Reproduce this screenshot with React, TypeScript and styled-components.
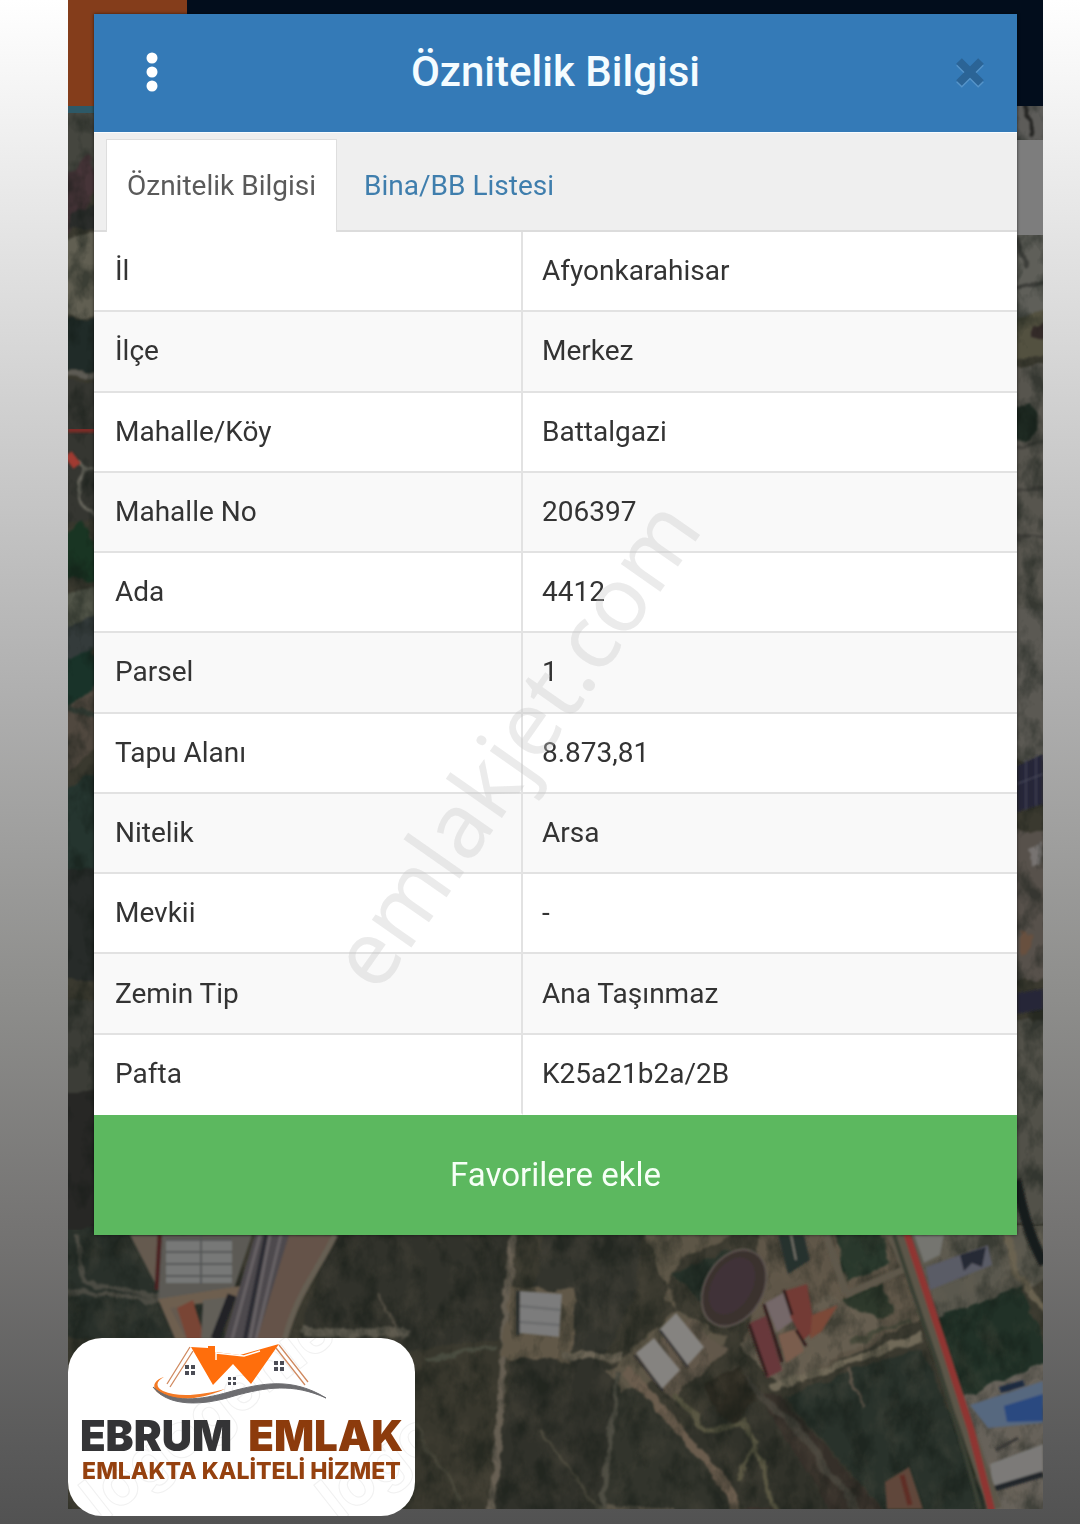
import React, { useState } from "react";
import styled, { createGlobalStyle } from "styled-components";

const GlobalStyle = createGlobalStyle`
  *, *::before, *::after { box-sizing: border-box; }
  body { margin: 0; font-family: Roboto, "Liberation Sans", sans-serif; color: #333; }
`;

const Page = styled.div`
  min-height: 100vh;
  padding: 0 37px 15px 68px;
  background: linear-gradient(180deg, #fff 0%, #dcdcdc 20%, #b0b0b0 45%, #8e8e8c 65%, #747372 81%, #5a5a5a 95%, #525252 100%);
`;

const Stage = styled.main`
  position: relative;
  padding: 14px 26px 274px;
  background: #33352e;
`;

const MapArt = styled.svg`
  position: absolute;
  inset: 0;
  width: 100%;
  height: 100%;
  display: block;
`;

const Dialog = styled.section`
  position: relative;
  background: #fff;
  box-shadow: 0 0 3px rgba(0, 0, 0, 0.6);
`;

const Header = styled.header`
  display: flex;
  align-items: center;
  justify-content: space-between;
  height: 118px;
  padding: 0 27px 2px 38px;
  background: #347ab7;
`;

const Title = styled.h1`
  flex: 1;
  margin: 0;
  padding-right: 11px;
  text-align: center;
  font-size: 42px;
  line-height: 56px;
  font-weight: 500;
  color: #f4fcff;
`;

const IconButton = styled.button`
  display: flex;
  align-items: center;
  justify-content: center;
  width: 40px;
  height: 56px;
  padding: 0;
  border: 0;
  background: none;
  cursor: pointer;
`;

const Tabs = styled.nav`
  display: flex;
  align-items: flex-end;
  height: 100px;
  padding-left: 12px;
  background: #efefef;
  border-top: 1px solid #f8fcff;
  box-shadow: inset 0 -2px #dcdcdc;
`;

const Tab = styled.button<{ $active: boolean }>`
  height: 93px;
  padding: 0 20px 1px;
  border: 1px solid ${(p) => (p.$active ? "#dedede" : "transparent")};
  border-bottom: 0;
  background: ${(p) => (p.$active ? "#fff" : "transparent")};
  color: ${(p) => (p.$active ? "#5a5a5a" : "#3f7ead")};
  font: 400 28px/40px Roboto, "Liberation Sans", sans-serif;
  margin-right: 6px;
  cursor: pointer;
`;

const Table = styled.table`
  width: 100%;
  height: 883px;
  table-layout: fixed;
  border-spacing: 0;
`;

const Row = styled.tr`
  &:nth-child(even) { background: #f9f9f9; }
  & > * { border-bottom: 2px solid #e2e2e2; }
  &:last-child > * { border-bottom-color: #fff; }
`;

const Label = styled.th`
  width: 429px;
  padding: 0 21px;
  border-right: 2px solid #e2e2e2;
  text-align: left;
  font-size: 28px;
  line-height: 40px;
  font-weight: 400;
`;

const Value = styled.td`
  padding: 0 19px;
  font-size: 28px;
  line-height: 40px;
`;

const Favorite = styled.button`
  display: block;
  width: 100%;
  height: 120px;
  border: 0;
  background: #5cb85f;
  color: #f6fff6;
  font: 400 33px/44px Roboto, "Liberation Sans", sans-serif;
  cursor: pointer;
`;

const Watermark = styled.span`
  position: absolute;
  left: 318px;
  top: 911px;
  font: 400 90px/90px "Noto Sans", sans-serif;
  color: rgba(200, 200, 200, 0.36);
  white-space: nowrap;
  transform: rotate(-55deg);
  transform-origin: 0 100%;
  pointer-events: none;
`;

const Brand = styled.aside`
  position: absolute;
  left: 0;
  bottom: -7px;
  display: flex;
  flex-direction: column;
  align-items: center;
  width: 347px;
  height: 178px;
  padding-top: 6px;
  overflow: hidden;
  border-radius: 34px;
  background: #fff;
`;

const BrandPattern = styled.span<{ $left: number }>`
  position: absolute;
  left: ${(p) => p.$left}px;
  bottom: -14px;
  font: 700 62px/62px Inter, sans-serif;
  color: transparent;
  -webkit-text-stroke: 1px #f1f1f1;
  white-space: nowrap;
  transform: rotate(-38deg);
  transform-origin: 0 100%;
`;

const House = styled.svg`
  position: relative;
  flex: none;
`;

const BrandName = styled.strong`
  position: relative;
  display: flex;
  gap: 16px;
  margin-top: 12px;
  font: 900 42px/40px Inter, sans-serif;
  color: #343436;
`;

const BrandAccent = styled.span`
  color: #8c3b0c;
`;

const BrandLine = styled.span`
  position: relative;
  font: 800 23px/30px Inter, sans-serif;
  color: #95410f;
  white-space: nowrap;
`;

const rows: [string, string][] = [
  ["İl", "Afyonkarahisar"],
  ["İlçe", "Merkez"],
  ["Mahalle/Köy", "Battalgazi"],
  ["Mahalle No", "206397"],
  ["Ada", "4412"],
  ["Parsel", "1"],
  ["Tapu Alanı", "8.873,81"],
  ["Nitelik", "Arsa"],
  ["Mevkii", "-"],
  ["Zemin Tip", "Ana Taşınmaz"],
  ["Pafta", "K25a21b2a/2B"],
];

const tabs = ["Öznitelik Bilgisi", "Bina/BB Listesi"];

function SatelliteMap() {
  return (
    <MapArt viewBox="68 0 975 1509" preserveAspectRatio="none" aria-hidden="true">
      <defs>
        <filter id="terrain" x="0" y="0" width="100%" height="100%" colorInterpolationFilters="sRGB">
          <feTurbulence type="fractalNoise" baseFrequency="0.05" numOctaves="3" seed="4" result="n" />
          <feDisplacementMap in="SourceGraphic" in2="n" scale="12" xChannelSelector="R" yChannelSelector="G" />
          <feGaussianBlur stdDeviation="1" />
        </filter>
        <filter id="soft" x="0" y="0" width="100%" height="100%">
          <feGaussianBlur stdDeviation="1" />
        </filter>
        <filter id="shade" x="0" y="0" width="100%" height="100%" colorInterpolationFilters="sRGB">
          <feTurbulence type="fractalNoise" baseFrequency="0.045 0.03" numOctaves="4" seed="8" />
          <feColorMatrix values="0 0 0 0 0.06  0 0 0 0 0.09  0 0 0 0 0.07  3 0 0 0 -1.3" />
        </filter>
        <filter id="dust" x="0" y="0" width="100%" height="100%" colorInterpolationFilters="sRGB">
          <feTurbulence type="fractalNoise" baseFrequency="0.04 0.03" numOctaves="5" seed="21" />
          <feColorMatrix values="0 0 0 0 0.48  0 0 0 0 0.43  0 0 0 0 0.36  0 3 0 0 -1.4" />
        </filter>
      </defs>
      <rect x="68" y="0" width="975" height="1509" fill="#3a392f" />
      <g filter="url(#terrain)">
        {/* fields under the dialog's lower edge */}
        <path d="M60 1225h90l80 114H60z" fill="#29302a" />
        <path d="M60 1290l118 12M76 1235l8 47 76 14" stroke="#4b4b43" strokeWidth="5" fill="none" />
        <path d="M330 1225h185l-10 115-90 40H290z" fill="#31322b" />
        <path d="M405 1350l95-10-7 180h-88z" fill="#38372d" />
        <path d="M515 1340l103 25-10 156h-118z" fill="#30312a" />
        <path d="M620 1370l110 120v29H602z" fill="#32342c" />
        <path d="M784 1395l138-48 70 172H890z" fill="#29322b" />
        <path d="M780 1395l110 124H745l-14-130z" fill="#352f29" />
        <path d="M545 1225h100l-10 70-30 60-80-14z" fill="#33342d" />
        <path d="M928 1310l90-28 35 80-60 30-24 70z" fill="#213127" />
        <path d="M680 1430l70-50 80 130H735z" fill="#31322a" />

        {/* roads and yards */}
        <path d="M300 1330c30 8 60-4 110 6" stroke="#5b584d" strokeWidth="9" fill="none" />
        <path d="M378 1294l18 34" stroke="#575247" strokeWidth="3" />
        <path d="M514 1225l-7 80-9 140-9 74" stroke="#655e52" strokeWidth="8" fill="none" />
        <path d="M425 1362l70-15" stroke="#484b3f" strokeWidth="4" />
        <path d="M512 1285l63 6-3 70-72-4z" fill="#615848" />
        <path d="M640 1225h120l-80 35-15 40 60 38-30 42-40-2-30 15-18-20 70-65z" fill="#5d5647" />
        <path d="M562 1354l60 3" stroke="#6c6556" strokeWidth="8" />
        <path d="M625 1368l80 90 28 38v23" stroke="#6a5c4d" strokeWidth="9" fill="none" />
        <path d="M618 1370l-10 80-8 69" stroke="#4e4d43" strokeWidth="5" fill="none" />
        <path d="M632 1358l60-40 34 32-52 50z" fill="#61574a" />
        <path d="M675 1272l45-18 36-5-54 54-22-20z" fill="#263129" />
        <path d="M760 1225h140l30 90-140 68-45-36z" fill="#5f5648" />
        <path d="M834 1225h45l10 40-45 15z" fill="#29382c" />
        <path d="M842 1300l40-18 10 30-38 19z" fill="#2d382b" />
        <path d="M740 1345l90-50 60 32-110 60z" fill="#665e50" />
        <path d="M770 1388l152-52" stroke="#706958" strokeWidth="8" />
        <path d="M850 1342l64-22" stroke="#484a3b" strokeWidth="4" />
        <path d="M730 1370l60 50 75 99" stroke="#45423a" strokeWidth="8" fill="none" />
        <path d="M704 1382l34-14 20 30-20 24-22-8z" fill="#2d2b22" />
        <path d="M675 1395l30 34 38-6 12 20-16 38M755 1445l25 74" stroke="#575541" strokeWidth="5" fill="none" />
        <path d="M849 1370l16 38" stroke="#5a5247" strokeWidth="3" />
        <path d="M400 1400l60 100M540 1430l60 80" stroke="#47463a" strokeWidth="3" />
        <path d="M605 1505l70 4v15h-75z" fill="#5a5548" />
        <path d="M908 1225h145v50l-128 48z" fill="#5a584e" />
        <path d="M955 1400l98-42v161h-58z" fill="#67625a" />
        <path d="M1005 1225c5 40 18 68 48 90" stroke="#68614f" strokeWidth="7" fill="none" />
      </g>
      <rect x="68" y="1225" width="975" height="284" filter="url(#shade)" opacity="0.42" />
      <rect x="68" y="1225" width="975" height="284" filter="url(#dust)" opacity="0.15" />

      <g filter="url(#terrain)">
        {/* left strip */}
        <path d="M58 110h47v80H58z" fill="#45463f" />
        <path d="M58 182l30-25 7 10v22l-20 40-17 5z" fill="#463438" />
        <path d="M78 210l27-10v30H68z" fill="#2b2d2b" />
        <path d="M58 240l47-8v86H58z" fill="#615f52" />
        <path d="M58 320h47v50H58z" fill="#202b28" />
        <path d="M58 374h47" stroke="#5d5b54" strokeWidth="7" />
        <path d="M58 382h47v140H58z" fill="#353631" />
        <path d="M78 462l12 8-14 14 4 18 20 20" stroke="#66655c" strokeWidth="4" fill="none" />
        <path d="M58 545l24-25 23 40v24l-47-10z" fill="#193523" />
        <path d="M58 592l40-6v38l-40 8z" fill="#515448" />
        <path d="M58 630l47-16v30l-47 20z" fill="#343b3b" />
        <path d="M58 664l34-16 13 35-30 22-17-8z" fill="#193329" />
        <path d="M58 716l47-40v70l-47 30z" fill="#50483f" />
        <path d="M58 700l47 24" stroke="#353e36" strokeWidth="5" />
        <path d="M58 790l47-20v120H58z" fill="#25352f" />
        <path d="M58 870h47v110H58z" fill="#272b29" />
        <path d="M58 1000h47v90H58z" fill="#3c3d37" />
        <path d="M58 1090h47v140H58z" fill="#272725" />

        {/* right strip */}
        <path d="M1007 100h46v44h-46z" fill="#5d5c59" />
        <path d="M1022 104l12 34" stroke="#252523" strokeWidth="4" />
        <path d="M1007 230h46v120h-46z" fill="#5f5f59" />
        <path d="M1017 238l10 30M1010 290l43-9" stroke="#3c3d39" strokeWidth="4" />
        <path d="M1007 322l46-14v45l-46 8z" fill="#535140" />
        <path d="M1033 326l20-6v24l-20-8z" fill="#332a28" />
        <path d="M1007 364h46v250h-46z" fill="#57554e" />
        <path d="M1007 410l24-8 7 24-12 16-19-6z" fill="#202c24" />
        <path d="M1007 448l46-7M1007 490l46-5M1007 540l46-6" stroke="#42413c" strokeWidth="3" />
        <path d="M1007 610h46v150h-46z" fill="#5b5953" />
        <path d="M1007 830h46v150h-46z" fill="#57514b" />
        <path d="M1028 848l14-5v20l-12 4z" fill="#777371" />
        <path d="M1020 932l14 6-14 18z" fill="#68503f" />
        <path d="M1007 1020h46v205h-46z" fill="#525149" />
      </g>
      <rect x="68" y="106" width="975" height="1120" filter="url(#shade)" opacity="0.45" />

      <g filter="url(#soft)">
        <path d="M68 429h27" stroke="#7c2926" strokeWidth="7" />
        <path d="M68 454l9 12" stroke="#a03a30" strokeWidth="9" />
        <path d="M1017 766l26-12v50l-26 8z" fill="#272838" />
        <path d="M1017 784l26-10M1026 760v50M1036 756v50" stroke="#4c4d62" strokeWidth="1" />
        <path d="M1017 993l26-4v20l-26 5z" fill="#262837" />
        <path d="M1016 1180c6 26 12 54 28 84" stroke="#171b1b" strokeWidth="10" fill="none" />

        {/* warehouses and railway */}
        <path d="M130 1235h30l20 58 20 46h-16z" fill="#655a4f" />
        <path d="M160 1235l-3 55" stroke="#4b2423" strokeWidth="5" />
        <path d="M162 1235h90l-20 60-74 5z" fill="#5c5a54" />
        <path d="M166 1240h66v43h-66z" fill="#777877" />
        <path d="M166 1240h66M166 1252h66M166 1264h66M166 1276h66M201 1236v48" stroke="#545656" strokeWidth="2" />
        <path d="M158 1299l82-13v12l-70 10 16 31h-11z" fill="#6e5f50" />
        <path d="M177 1308l16-8 12 39h-18z" fill="#794535" />
        <path d="M203 1300l28-3-15 42h-15z" fill="#625e59" />
        <path d="M232 1295l-17 44" stroke="#202426" strokeWidth="9" />
        <path d="M255 1235h34l-27 104h-38z" fill="#4d4a4d" />
        <path d="M260 1235l-28 104M270 1235l-20 104M281 1235l-25 104" stroke="#676265" strokeWidth="3" />
        <path d="M266 1235l-21 104" stroke="#2b2c32" strokeWidth="4" />
        <path d="M289 1235h48l-32 50-22 54h-26z" fill="#655348" />
        <path d="M335 1235c-20 40-38 58-50 104" stroke="#665e52" strokeWidth="6" fill="none" />

        {/* halls */}
        <path d="M520 1291l42 3-3 43-40-4z" fill="#7c7c7b" />
        <path d="M520 1306l41 4M520 1322l40 3" stroke="#666869" strokeWidth="2" />
        <path d="M518 1291v44" stroke="#252a2c" strokeWidth="3" />
        <path d="M676 1313l28 34-17 19-28-36z" fill="#858380" />
        <path d="M654 1338l26 32-18 19-26-36z" fill="#858380" />
        <path d="M635 1355l28 36M660 1330l28 37" stroke="#27282a" strokeWidth="2" />
        <ellipse cx="734" cy="1288" rx="29" ry="41" transform="rotate(30 734 1288)" fill="#3a302e" stroke="#5d5550" strokeWidth="2" />
        <ellipse cx="732" cy="1286" rx="20" ry="31" transform="rotate(30 732 1286)" fill="#473742" opacity="0.45" />

        {/* school block */}
        <path d="M778 1235h26l6 25-22 14z" fill="#28302e" />
        <path d="M791 1235l5 25" stroke="#74726a" strokeWidth="2" />
        <path d="M750 1323l16-7 16 54-15 8z" fill="#68383a" />
        <path d="M765 1303l18-10 11 27-17 12z" fill="#756869" />
        <path d="M785 1291l22-7 8 46-12 10-12-22z" fill="#733a35" />
        <path d="M812 1315l26-10-16 26-12 8z" fill="#7b4839" />
        <path d="M778 1335l18-6 8 22-18 12z" fill="#7a5d4d" />
        <path d="M749 1324l18 52M764 1304l18 58M784 1290l8 25M796 1330l10 16" stroke="#301f1e" strokeWidth="3" />
        <path d="M845 1295l60-26-14-34M826 1235l20 58" stroke="#5f594c" strokeWidth="7" fill="none" />
        <path d="M885 1482l24-15 14 42h-36z" fill="#61463b" />
        <path d="M902 1475l8 30" stroke="#5e2d27" strokeWidth="5" />

        {/* district past the boundary */}
        <path d="M914 1235h30l-4 20-16 8z" fill="#757470" />
        <path d="M926 1267l62-22 4 20-62 25z" fill="#5a5b66" />
        <path d="M960 1255l26-8-4 20-10-4-8 8z" fill="#282a34" />
        <path d="M970 1405l73-24v42l-55 5z" fill="#56677f" />
        <path d="M1004 1406l39-12v27l-36 1z" fill="#294a80" />
        <path d="M1000 1390l24-7" stroke="#1e2941" strokeWidth="6" />
        <path d="M990 1464l53-20v28l-50 17z" fill="#7b7a78" />
        <path d="M990 1490l53-16" stroke="#22252b" strokeWidth="6" />
        <path d="M996 1450l22-12" stroke="#383735" strokeWidth="3" />
        <path d="M966 1438l10 38" stroke="#24291f" strokeWidth="6" />
        <path d="M903 1235l20 60 20 60 30 90 22 64" stroke="#5b574a" strokeWidth="14" fill="none" />
        <path d="M894 1235l20 60 24 70 26 85 16 59" stroke="#3b4034" strokeWidth="4" fill="none" />
        <path d="M905 1228l22 66 20 61 24 75 21 82" stroke="#8f3430" strokeWidth="7" fill="none" />
      </g>
      <rect x="68" y="0" width="119" height="106" fill="#843d1b" />
      <rect x="68" y="106" width="119" height="7" fill="#2d5967" />
      <rect x="187" y="0" width="856" height="106" fill="#020d1c" />
      <rect x="1017" y="140" width="26" height="95" fill="#7d7d7d" />
    </MapArt>
  );
}

function HouseLogo() {
  return (
    <House width="180" height="60" viewBox="152 1344 180 60" aria-hidden="true">
      <path d="M191 1347l17 1v-2h7v6l25 3 39-11-28 40-18-20-20 21z" fill="#ff6e0c" />
      <path d="M216 1350v10M216 1353l28 3 16-5" stroke="#fff" strokeWidth="1.5" fill="none" />
      <path d="M190 1347l-23 37M193 1351l-23 36M279 1345l29 37M276 1348l29 37" stroke="#d08a60" strokeWidth="1.3" fill="none" />
      <path d="M164 1377c-8 4-9 10-1 14 15 7 40 4 62-2-19 9-46 13-61 7-13-5-13-15 0-19z" fill="#f47a25" />
      <path d="M153 1387c18 17 48 13 76 5 33-9 63-15 97 6-33-15-60-11-92-2-32 10-66 11-81-9z" fill="#6d6d70" stroke="#6d6d70" />
      <path
        d="M185 1365h4v4h-4zM191 1365h4v4h-4zM185 1371h4v4h-4zM191 1371h4v4h-4zM274 1361h4v4h-4zM280 1361h4v4h-4zM274 1367h4v4h-4zM280 1367h4v4h-4zM228 1377h3v3h-3zM233 1377h3v3h-3zM228 1382h3v3h-3zM233 1382h3v3h-3z"
        fill="#4b4c55"
      />
    </House>
  );
}

export default function App() {
  const [active, setActive] = useState(0);
  return (
    <Page>
      <GlobalStyle />
      <Stage>
        <SatelliteMap />
        <Dialog aria-label="Öznitelik Bilgisi">
          <Header>
            <IconButton type="button" aria-label="Menü">
              <svg width="12" height="42" viewBox="0 0 12 42" fill="#fff">
                <circle cx="6" cy="7" r="5.5" />
                <circle cx="6" cy="21" r="5.5" />
                <circle cx="6" cy="35" r="5.5" />
              </svg>
            </IconButton>
            <Title>Öznitelik Bilgisi</Title>
            <IconButton type="button" aria-label="Kapat">
              <svg width="30" height="32" viewBox="0 0 30 32" fill="none" strokeWidth="8">
                <path d="M4 7l22 22M26 7L4 29" stroke="#5594c9" />
                <path d="M4 5l22 22M26 5L4 27" stroke="#2b6496" />
              </svg>
            </IconButton>
          </Header>
          <Tabs>
            {tabs.map((name, i) => (
              <Tab key={name} type="button" $active={i === active} onClick={() => setActive(i)}>
                {name}
              </Tab>
            ))}
          </Tabs>
          <Table>
            <tbody>
              {rows.map(([label, value]) => (
                <Row key={label}>
                  <Label scope="row">{label}</Label>
                  <Value>{value}</Value>
                </Row>
              ))}
            </tbody>
          </Table>
          <Favorite type="button">Favorilere ekle</Favorite>
        </Dialog>
        <Watermark>emlakjet.com</Watermark>
        <Brand>
          <BrandPattern $left={40} aria-hidden="true">logogenie</BrandPattern>
          <BrandPattern $left={276} aria-hidden="true">logogenie</BrandPattern>
          <HouseLogo />
          <BrandName>
            EBRUM <BrandAccent>EMLAK</BrandAccent>
          </BrandName>
          <BrandLine>EMLAKTA KALİTELİ HİZMET</BrandLine>
        </Brand>
      </Stage>
    </Page>
  );
}
